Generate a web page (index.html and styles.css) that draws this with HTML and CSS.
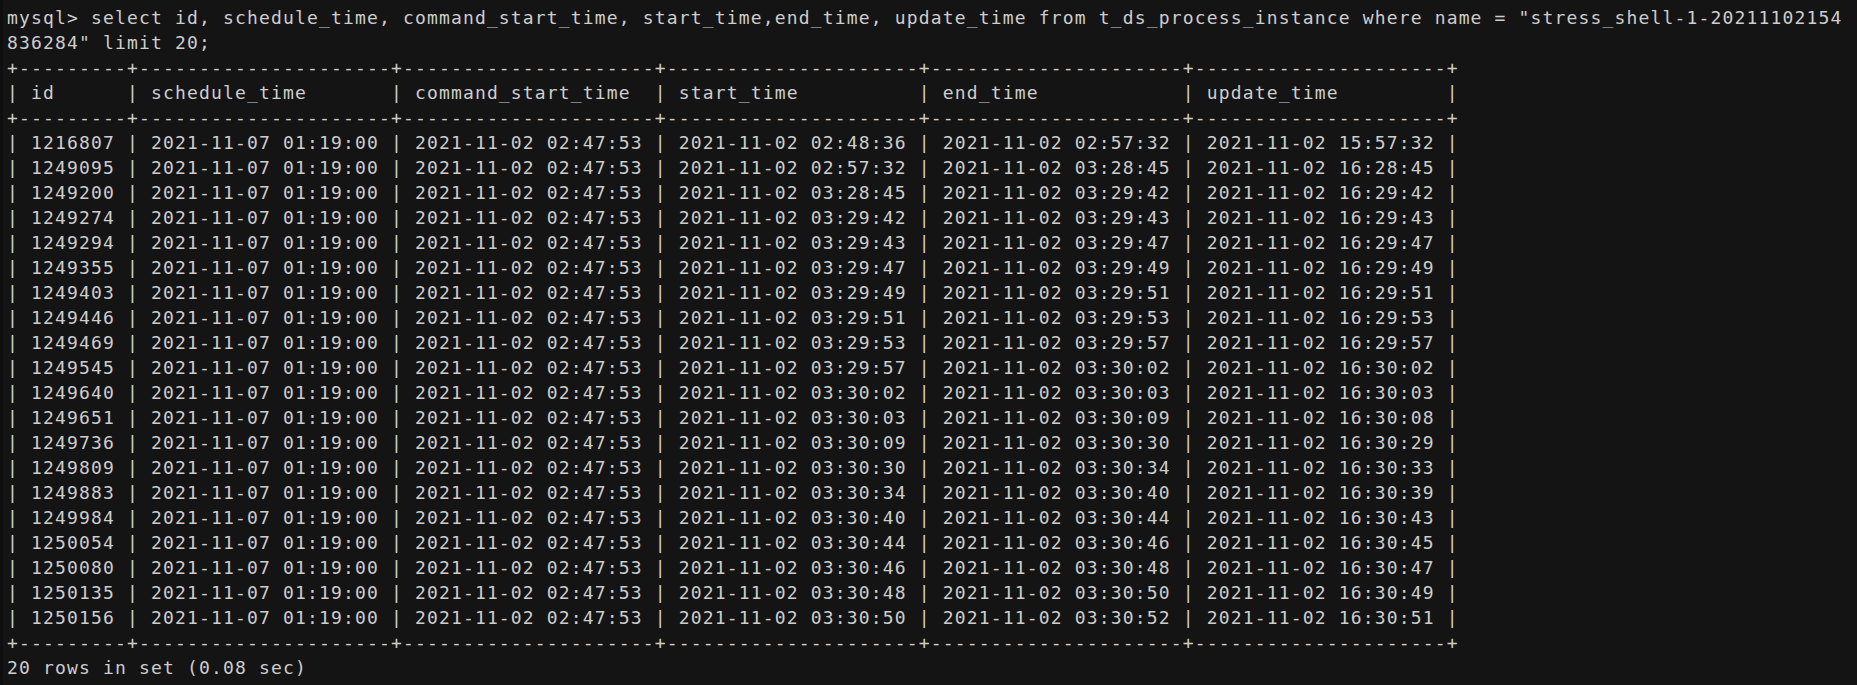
FILE: index.html
```html
<!DOCTYPE html>
<html>
<head>
<meta charset="utf-8">
<link rel="stylesheet" href="styles.css">
</head>
<body>
<div class="terminal">
<pre class="screen">mysql&gt; select id, schedule_time, command_start_time, start_time,end_time, update_time from t_ds_process_instance where name = "stress_shell-1-20211102154
836284" limit 20;
+---------+---------------------+---------------------+---------------------+---------------------+---------------------+
| id      | schedule_time       | command_start_time  | start_time          | end_time            | update_time         |
+---------+---------------------+---------------------+---------------------+---------------------+---------------------+
| 1216807 | 2021-11-07 01:19:00 | 2021-11-02 02:47:53 | 2021-11-02 02:48:36 | 2021-11-02 02:57:32 | 2021-11-02 15:57:32 |
| 1249095 | 2021-11-07 01:19:00 | 2021-11-02 02:47:53 | 2021-11-02 02:57:32 | 2021-11-02 03:28:45 | 2021-11-02 16:28:45 |
| 1249200 | 2021-11-07 01:19:00 | 2021-11-02 02:47:53 | 2021-11-02 03:28:45 | 2021-11-02 03:29:42 | 2021-11-02 16:29:42 |
| 1249274 | 2021-11-07 01:19:00 | 2021-11-02 02:47:53 | 2021-11-02 03:29:42 | 2021-11-02 03:29:43 | 2021-11-02 16:29:43 |
| 1249294 | 2021-11-07 01:19:00 | 2021-11-02 02:47:53 | 2021-11-02 03:29:43 | 2021-11-02 03:29:47 | 2021-11-02 16:29:47 |
| 1249355 | 2021-11-07 01:19:00 | 2021-11-02 02:47:53 | 2021-11-02 03:29:47 | 2021-11-02 03:29:49 | 2021-11-02 16:29:49 |
| 1249403 | 2021-11-07 01:19:00 | 2021-11-02 02:47:53 | 2021-11-02 03:29:49 | 2021-11-02 03:29:51 | 2021-11-02 16:29:51 |
| 1249446 | 2021-11-07 01:19:00 | 2021-11-02 02:47:53 | 2021-11-02 03:29:51 | 2021-11-02 03:29:53 | 2021-11-02 16:29:53 |
| 1249469 | 2021-11-07 01:19:00 | 2021-11-02 02:47:53 | 2021-11-02 03:29:53 | 2021-11-02 03:29:57 | 2021-11-02 16:29:57 |
| 1249545 | 2021-11-07 01:19:00 | 2021-11-02 02:47:53 | 2021-11-02 03:29:57 | 2021-11-02 03:30:02 | 2021-11-02 16:30:02 |
| 1249640 | 2021-11-07 01:19:00 | 2021-11-02 02:47:53 | 2021-11-02 03:30:02 | 2021-11-02 03:30:03 | 2021-11-02 16:30:03 |
| 1249651 | 2021-11-07 01:19:00 | 2021-11-02 02:47:53 | 2021-11-02 03:30:03 | 2021-11-02 03:30:09 | 2021-11-02 16:30:08 |
| 1249736 | 2021-11-07 01:19:00 | 2021-11-02 02:47:53 | 2021-11-02 03:30:09 | 2021-11-02 03:30:30 | 2021-11-02 16:30:29 |
| 1249809 | 2021-11-07 01:19:00 | 2021-11-02 02:47:53 | 2021-11-02 03:30:30 | 2021-11-02 03:30:34 | 2021-11-02 16:30:33 |
| 1249883 | 2021-11-07 01:19:00 | 2021-11-02 02:47:53 | 2021-11-02 03:30:34 | 2021-11-02 03:30:40 | 2021-11-02 16:30:39 |
| 1249984 | 2021-11-07 01:19:00 | 2021-11-02 02:47:53 | 2021-11-02 03:30:40 | 2021-11-02 03:30:44 | 2021-11-02 16:30:43 |
| 1250054 | 2021-11-07 01:19:00 | 2021-11-02 02:47:53 | 2021-11-02 03:30:44 | 2021-11-02 03:30:46 | 2021-11-02 16:30:45 |
| 1250080 | 2021-11-07 01:19:00 | 2021-11-02 02:47:53 | 2021-11-02 03:30:46 | 2021-11-02 03:30:48 | 2021-11-02 16:30:47 |
| 1250135 | 2021-11-07 01:19:00 | 2021-11-02 02:47:53 | 2021-11-02 03:30:48 | 2021-11-02 03:30:50 | 2021-11-02 16:30:49 |
| 1250156 | 2021-11-07 01:19:00 | 2021-11-02 02:47:53 | 2021-11-02 03:30:50 | 2021-11-02 03:30:52 | 2021-11-02 16:30:51 |
+---------+---------------------+---------------------+---------------------+---------------------+---------------------+
20 rows in set (0.08 sec)</pre>
</div>
</body>
</html>
```
FILE: styles.css
```css
html, body {
  margin: 0;
  padding: 0;
  background: #141414;
  width: 100%;
  height: 100%;
  overflow: hidden;
}

.terminal {
  box-sizing: border-box;
  height: 100%;
  border-left: 3px solid #0e0e0e;
  padding: 5px 0 0 4px;
}

.screen {
  margin: 0;
  font-family: "DejaVu Sans Mono", "Liberation Mono", monospace;
  font-size: 18px;
  letter-spacing: 1.16px;
  line-height: 25px;
  color: #cdcdcd;
  white-space: pre;
}
```
